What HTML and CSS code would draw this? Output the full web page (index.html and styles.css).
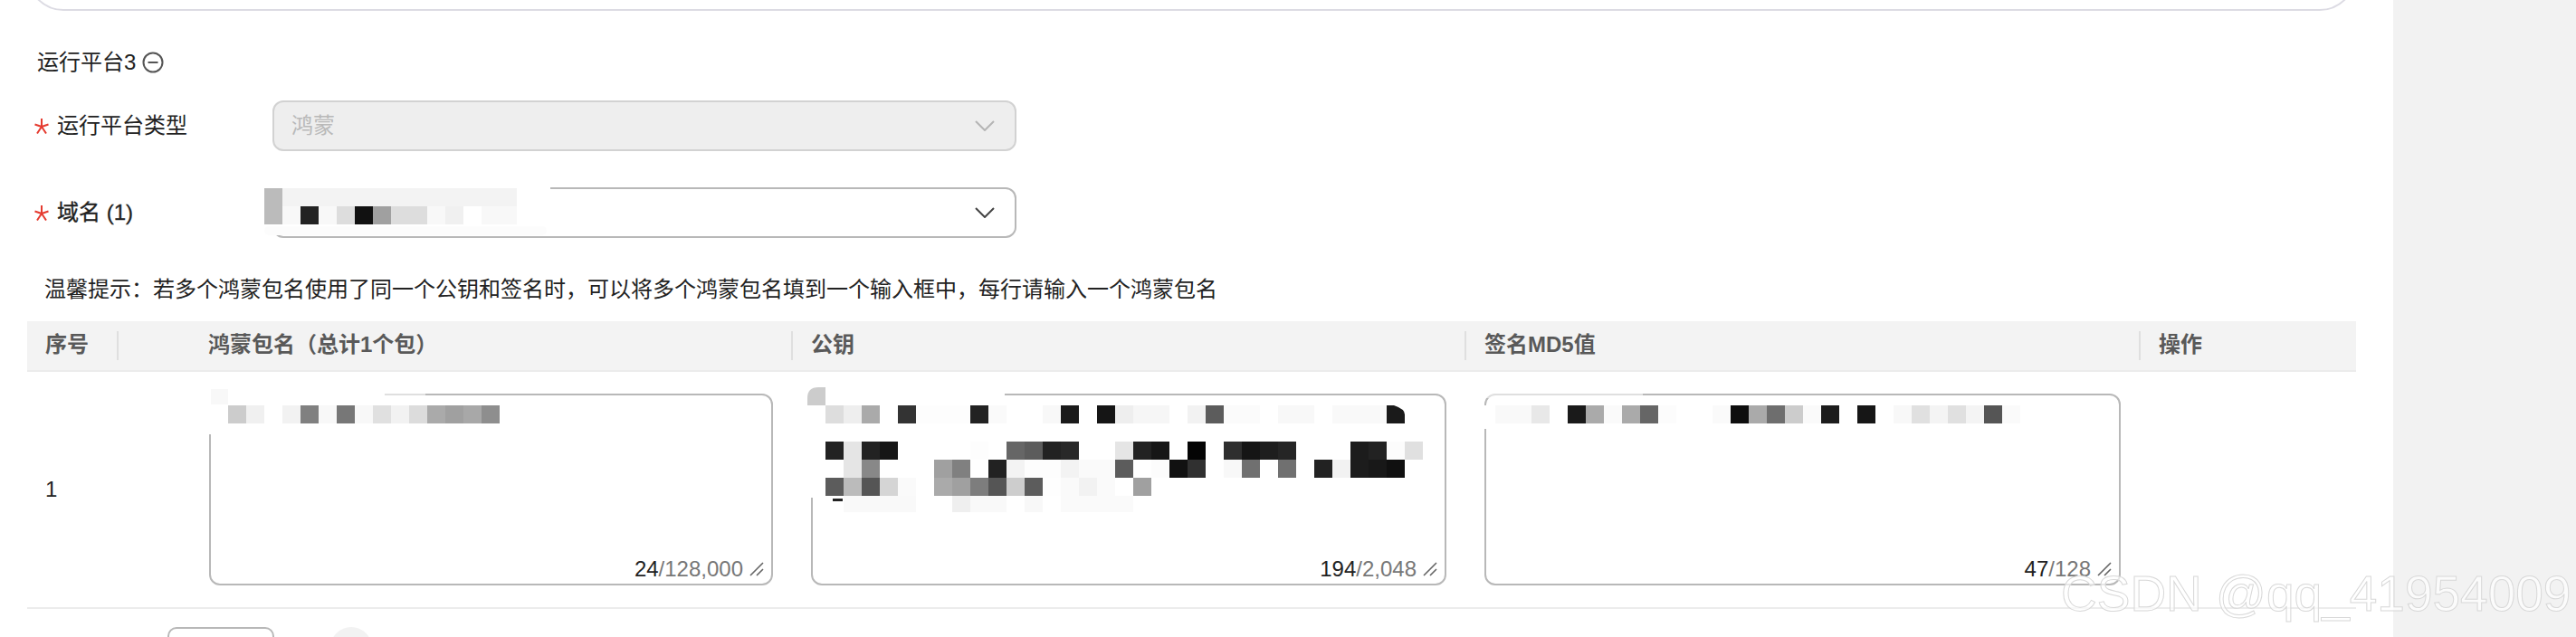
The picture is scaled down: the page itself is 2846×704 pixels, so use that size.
FILE: index.html
```html
<!DOCTYPE html>
<html lang="zh-CN">
<head>
<meta charset="utf-8">
<title>运行平台</title>
<link rel="stylesheet" href="styles.css">
</head>
<body>
<main class="main">
  <div class="prev-card"></div>
  <div class="platform-title">
    <span>运行平台3</span>
    <svg class="minus-icon" viewBox="0 0 24 24"><circle cx="12" cy="12" r="10.5" fill="none" stroke="#555" stroke-width="2"/><path d="M6.5 12h11" stroke="#555" stroke-width="2"/></svg>
  </div>

  <div class="form-row">
    <label class="form-label">
      <svg class="star" viewBox="0 0 16 17"><path d="M8 0v9M8 9L0.5 6.5M8 9l7.5-2.5M8 9l-5 7.5M8 9l5 7.5" stroke="#e53a2f" stroke-width="2" fill="none"/></svg>
      <span>运行平台类型</span>
    </label>
    <div class="select select-disabled">
      <span class="select-value">鸿蒙</span>
      <svg class="chevron" viewBox="0 0 22 12"><path d="M1 1l10 10L21 1" fill="none" stroke="#b5b5b5" stroke-width="2"/></svg>
    </div>
  </div>

  <div class="form-row form-row-second">
    <label class="form-label form-label-strong">
      <svg class="star" viewBox="0 0 16 17"><path d="M8 0v9M8 9L0.5 6.5M8 9l7.5-2.5M8 9l-5 7.5M8 9l5 7.5" stroke="#e53a2f" stroke-width="2" fill="none"/></svg>
      <span>域名 (1)</span>
    </label>
    <div class="select">
      <svg class="chevron" viewBox="0 0 22 12"><path d="M1 1l10 10L21 1" fill="none" stroke="#444" stroke-width="2"/></svg>
      <svg class="mosaic mosaic-domain" viewBox="0 0 320 60">
        <rect x="0" y="0" width="316" height="44" fill="#fff"/>
        <rect x="0" y="44" width="312" height="10" rx="5" fill="#fcfcfc"/>
        <rect x="0" y="2" width="279" height="20" fill="#f3f3f3"/>
        <rect x="20" y="22" width="259" height="20" fill="#f8f8f8"/>
        <rect x="0" y="2" width="20" height="40" fill="#bbb"/>
        <rect x="40" y="22" width="20" height="20" fill="#222"/>
        <rect x="80" y="22" width="20" height="20" fill="#ddd"/>
        <rect x="100" y="22" width="20" height="20" fill="#111"/>
        <rect x="120" y="22" width="20" height="20" fill="#a0a0a0"/>
        <rect x="140" y="22" width="40" height="20" fill="#ddd"/>
        <rect x="200" y="22" width="20" height="20" fill="#f0f0f0"/>
        <rect x="220" y="22" width="20" height="20" fill="#fff"/>
      </svg>
    </div>
  </div>

  <p class="hint">温馨提示&#xFF1A;若多个鸿蒙包名使用了同一个公钥和签名时&#xFF0C;可以将多个鸿蒙包名填到一个输入框中&#xFF0C;每行请输入一个鸿蒙包名</p>

  <div class="table">
    <div class="table-head">
      <div class="th th-first">序号</div>
      <div class="th th-package">鸿蒙包名&#xFF08;总计1个包&#xFF09;</div>
      <div class="th">公钥</div>
      <div class="th">签名MD5值</div>
      <div class="th">操作</div>
    </div>
    <div class="table-row">
      <div class="td td-first">1</div>
      <div class="td td-package">
        <div class="textarea">
          <svg class="mosaic mosaic-package" viewBox="0 0 370 55">
            <rect x="0" y="0" width="197" height="52" fill="#fff"/>
            <rect x="197" y="0" width="45" height="12" fill="#fff" fill-opacity=".55"/>
            <rect x="5" y="2" width="19" height="17" fill="#f8f8f8"/>
            <g transform="translate(24 20)">
              <rect x="0" width="20" height="20" fill="#ccc"/><rect x="20" width="20" height="20" fill="#f0f0f0"/>
              <rect x="60" width="20" height="20" fill="#f2f2f2"/><rect x="80" width="20" height="20" fill="#808080"/>
              <rect x="100" width="20" height="20" fill="#f8f8f8"/><rect x="120" width="20" height="20" fill="#777"/>
              <rect x="140" width="20" height="20" fill="#f8f8f8"/><rect x="160" width="20" height="20" fill="#e0e0e0"/>
              <rect x="180" width="20" height="20" fill="#f2f2f2"/><rect x="200" width="20" height="20" fill="#dcdcdc"/>
              <rect x="220" width="20" height="20" fill="#aaa"/><rect x="240" width="20" height="20" fill="#a0a0a0"/>
              <rect x="260" width="20" height="20" fill="#a8a8a8"/><rect x="280" width="20" height="20" fill="#8e8e8e"/>
            </g>
          </svg>
          <div class="counter"><span><b>24</b>/128,000</span><svg class="resize" viewBox="0 0 16 16"><path d="M1 15L15 1M8 15l7-7" stroke="#666" stroke-width="1.6"/></svg></div>
        </div>
      </div>
      <div class="td">
        <div class="textarea">
          <svg class="mosaic mosaic-key" viewBox="0 0 690 145">
            <rect x="0" y="0" width="220" height="20" fill="#fff"/>
            <rect x="0" y="20" width="22" height="102" fill="#fff"/>
            <rect x="22" y="20" width="640" height="118" fill="#fff"/>
            <path d="M2 20V12Q2 0 14 0h8v20z" fill="#ccc"/>
            <rect x="30" y="123" width="11" height="3" fill="#222"/>
            <g transform="translate(22 20)">
              <rect x="0" width="20" height="20" fill="#ddd"/><rect x="20" width="20" height="20" fill="#eee"/><rect x="40" width="20" height="20" fill="#aaa"/><rect x="80" width="20" height="20" fill="#333"/><rect x="100" width="60" height="20" fill="#fdfdfd"/><rect x="160" width="20" height="20" fill="#222"/><rect x="180" width="20" height="20" fill="#fafafa"/><rect x="240" width="20" height="20" fill="#f8f8f8"/><rect x="260" width="20" height="20" fill="#1a1a1a"/><rect x="300" width="20" height="20" fill="#151515"/><rect x="320" width="20" height="20" fill="#eee"/><rect x="340" width="40" height="20" fill="#f6f6f6"/><rect x="400" width="20" height="20" fill="#f2f2f2"/><rect x="420" width="20" height="20" fill="#5c5c5c"/><rect x="440" width="40" height="20" fill="#fbfbfb"/><rect x="500" width="40" height="20" fill="#f8f8f8"/><rect x="560" width="60" height="20" fill="#f9f9f9"/>
              <path d="M620 0h8q12 4 12 10v10h-20z" fill="#1a1a1a"/>
            </g>
            <g transform="translate(22 60)">
              <rect x="0" width="20" height="20" fill="#222"/><rect x="20" width="20" height="20" fill="#e5e5e5"/><rect x="40" width="20" height="20" fill="#222"/><rect x="60" width="20" height="20" fill="#161616"/><rect x="160" width="20" height="20" fill="#fdfdfd"/><rect x="200" width="20" height="20" fill="#666"/><rect x="220" width="20" height="20" fill="#5c5c5c"/><rect x="240" width="20" height="20" fill="#222"/><rect x="260" width="20" height="20" fill="#282828"/><rect x="320" width="20" height="20" fill="#e5e5e5"/><rect x="340" width="20" height="20" fill="#222"/><rect x="360" width="20" height="20" fill="#161616"/><rect x="400" width="20" height="20" fill="#040404"/><rect x="440" width="20" height="20" fill="#2e2e2e"/><rect x="460" width="20" height="20" fill="#151515"/><rect x="480" width="20" height="20" fill="#1e1e1e"/><rect x="500" width="20" height="20" fill="#252525"/><rect x="580" width="20" height="20" fill="#1c1c1c"/><rect x="600" width="20" height="20" fill="#222"/><rect x="620" width="20" height="20" fill="#fcfcfc"/><rect x="640" width="20" height="20" fill="#e0e0e0"/>
            </g>
            <g transform="translate(22 80)">
              <rect x="20" width="20" height="20" fill="#e5e5e5"/><rect x="40" width="20" height="20" fill="#888"/><rect x="120" width="20" height="20" fill="#a0a0a0"/><rect x="140" width="20" height="20" fill="#808080"/><rect x="180" width="20" height="20" fill="#222"/><rect x="200" width="20" height="20" fill="#f3f3f3"/><rect x="220" width="40" height="20" fill="#fdfdfd"/><rect x="260" width="20" height="20" fill="#f3f3f3"/><rect x="280" width="40" height="20" fill="#fafafa"/><rect x="320" width="20" height="20" fill="#5c5c5c"/><rect x="360" width="20" height="20" fill="#fcfcfc"/><rect x="380" width="20" height="20" fill="#111"/><rect x="400" width="20" height="20" fill="#303030"/><rect x="440" width="20" height="20" fill="#f8f8f8"/><rect x="460" width="20" height="20" fill="#707070"/><rect x="500" width="20" height="20" fill="#707070"/><rect x="540" width="20" height="20" fill="#222"/><rect x="560" width="20" height="20" fill="#f2f2f2"/><rect x="580" width="20" height="20" fill="#1c1c1c"/><rect x="600" width="20" height="20" fill="#181818"/><rect x="620" width="20" height="20" fill="#101010"/>
            </g>
            <g transform="translate(22 100)">
              <rect x="0" width="20" height="20" fill="#5c5c5c"/><rect x="20" width="20" height="20" fill="#bbb"/><rect x="40" width="20" height="20" fill="#555"/><rect x="60" width="20" height="20" fill="#d5d5d5"/><rect x="80" width="20" height="20" fill="#fafafa"/><rect x="120" width="20" height="20" fill="#aaa"/><rect x="140" width="20" height="20" fill="#a0a0a0"/><rect x="160" width="20" height="20" fill="#7d7d7d"/><rect x="180" width="20" height="20" fill="#555"/><rect x="200" width="20" height="20" fill="#cdcdcd"/><rect x="220" width="20" height="20" fill="#5c5c5c"/><rect x="240" width="20" height="20" fill="#fefefe"/><rect x="260" width="20" height="20" fill="#fafafa"/><rect x="280" width="20" height="20" fill="#f2f2f2"/><rect x="300" width="20" height="20" fill="#fafafa"/><rect x="340" width="20" height="20" fill="#a0a0a0"/>
            </g>
            <g transform="translate(22 120)">
              <rect x="20" width="80" height="18" fill="#f9f9f9"/><rect x="140" width="20" height="18" fill="#efefef"/><rect x="160" width="40" height="18" fill="#f9f9f9"/><rect x="220" width="20" height="18" fill="#f8f8f8"/><rect x="260" width="80" height="18" fill="#fafafa"/>
            </g>
          </svg>
          <div class="counter"><span><b>194</b>/2,048</span><svg class="resize" viewBox="0 0 16 16"><path d="M1 15L15 1M8 15l7-7" stroke="#666" stroke-width="1.6"/></svg></div>
        </div>
      </div>
      <div class="td">
        <div class="textarea">
          <svg class="mosaic mosaic-md5" viewBox="0 0 580 55">
            <rect x="0" y="0" width="177" height="12" fill="#fff" fill-opacity=".55"/>
            <rect x="0" y="20" width="14" height="26" fill="#fff"/>
            <g transform="translate(14 20)">
              <rect x="0" width="40" height="20" fill="#f9f9f9"/><rect x="40" width="20" height="20" fill="#e8e8e8"/><rect x="80" width="20" height="20" fill="#1a1a1a"/><rect x="100" width="20" height="20" fill="#aaa"/><rect x="120" width="20" height="20" fill="#fafafa"/><rect x="140" width="20" height="20" fill="#aaa"/><rect x="160" width="20" height="20" fill="#666"/><rect x="180" width="20" height="20" fill="#fcfcfc"/><rect x="240" width="20" height="20" fill="#fafafa"/><rect x="260" width="20" height="20" fill="#0e0e0e"/><rect x="280" width="20" height="20" fill="#aaa"/><rect x="300" width="20" height="20" fill="#6e6e6e"/><rect x="320" width="20" height="20" fill="#ccc"/><rect x="340" width="20" height="20" fill="#fafafa"/><rect x="360" width="20" height="20" fill="#1c1c1c"/><rect x="400" width="20" height="20" fill="#161616"/><rect x="440" width="20" height="20" fill="#f8f8f8"/><rect x="460" width="20" height="20" fill="#e0e0e0"/><rect x="480" width="20" height="20" fill="#f4f4f4"/><rect x="500" width="20" height="20" fill="#e0e0e0"/><rect x="520" width="20" height="20" fill="#f4f4f4"/><rect x="540" width="20" height="20" fill="#555"/><rect x="560" width="20" height="20" fill="#fafafa"/>
            </g>
          </svg>
          <div class="counter"><span><b>47</b>/128</span><svg class="resize" viewBox="0 0 16 16"><path d="M1 15L15 1M8 15l7-7" stroke="#666" stroke-width="1.6"/></svg></div>
        </div>
      </div>
      <div class="td"></div>
    </div>
  </div>

  <div class="pager">
    <div class="pager-box"></div>
    <div class="pager-dot"></div>
  </div>
</main>
<aside class="side"></aside>
<div class="watermark">CSDN @qq_41954009</div>
</body>
</html>
```
FILE: styles.css
```css
* { box-sizing: border-box; }
html, body { margin: 0; height: 704px; overflow: hidden; }
body {
  position: relative;
  display: flex;
  background: #fff;
  color: #222;
  font: 24px/36px "Liberation Sans", "Noto Sans CJK SC", sans-serif;
}
.main { width: 2644px; height: 704px; overflow: hidden; padding-left: 30px; flex: none; }
.side { flex: 1; background: #f2f2f2; }

.prev-card {
  width: 2573px;
  height: 52px;
  margin-top: -40px;
  border: 2px solid #dcdbe3;
  border-radius: 0 0 40px 40px;
}

.platform-title {
  display: flex;
  align-items: center;
  gap: 7px;
  margin: 39px 0 24px 11px;
  height: 36px;
}
.minus-icon { width: 24px; height: 24px; }

.form-row { display: flex; align-items: center; height: 56px; }
.form-row-second { margin-top: 40px; }
.form-label { display: flex; align-items: center; gap: 9px; width: 271px; padding-left: 8px; }
.form-label-strong { -webkit-text-stroke: .3px #222; }
.star { width: 16px; height: 17px; flex: none; }

.select {
  position: relative;
  display: flex;
  align-items: center;
  justify-content: space-between;
  width: 822px;
  height: 56px;
  padding: 0 22px 0 19px;
  background: #fff;
  border: 2px solid #b8b8b8;
  border-radius: 12px;
}
.select .chevron { margin-left: auto; }
.select-disabled { background: #eee; border-color: #d2d2d2; color: #b9b9b9; }
.chevron { width: 22px; height: 12px; }

.mosaic { position: absolute; overflow: visible; }
.mosaic-domain { left: -11px; top: -3px; width: 320px; height: 60px; }
.mosaic-package { left: -5px; top: -9px; width: 370px; height: 55px; }
.mosaic-key { left: -8px; top: -9px; width: 690px; height: 145px; }
.mosaic-md5 { left: -4px; top: -9px; width: 580px; height: 55px; }

.hint { margin: 39px 0 17px 19px; height: 36px; }

.table { width: 2573px; }
.table-head, .table-row {
  display: grid;
  grid-template-columns: 99px 745px 744px 745px 240px;
}
.table-head {
  height: 56px;
  padding-top: 11px;
  background: #f3f3f3;
  border-bottom: 2px solid #ececec;
}
.th {
  height: 32px;
  padding-left: 20px;
  line-height: 30px;
  border-left: 2px solid #dfdfdf;
  color: #595959;
  font-weight: 700;
}
.th-first { border-left: 0; }
.th-package { padding-left: 99px; }

.table-row { height: 262px; padding: 24px 0; border-bottom: 2px solid #ececec; }
.td { padding: 0 20px 0 22px; }
.td-first { padding: 0 0 0 20px; align-self: center; }
.td-package { padding-left: 102px; }

.textarea {
  position: relative;
  height: 212px;
  background: #fff;
  border: 2px solid #b8b8b8;
  border-radius: 12px;
}
.counter {
  position: absolute;
  right: 8px;
  bottom: -2px;
  display: flex;
  align-items: center;
  gap: 7px;
  color: #777;
}
.counter b { font-weight: 400; color: #222; }
.resize { width: 16px; height: 16px; }

.pager { display: flex; gap: 62px; margin: 20px 0 0 155px; }
.pager-box { width: 118px; height: 50px; border: 2px solid #b8b8b8; border-radius: 10px; }
.pager-dot { width: 46px; height: 46px; background: #f2f2f2; border-radius: 50%; }

.watermark {
  position: absolute;
  left: 2277px;
  top: 620px;
  font-size: 55px;
  line-height: 72px;
  white-space: nowrap;
  color: rgba(255, 255, 255, .65);
  -webkit-text-stroke: 1px #d8d8d8;
}
```
